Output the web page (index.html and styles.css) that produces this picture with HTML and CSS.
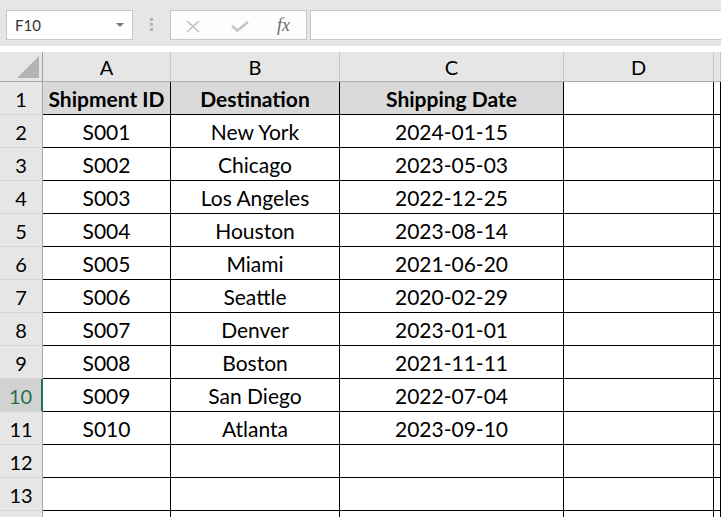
FILE: index.html
```html
<!DOCTYPE html>
<html lang="en">

<head>
    <meta charset="UTF-8">
    <meta name="viewport" content="width=device-width, initial-scale=1.0">
    <title>Shipments</title>
    <link rel="stylesheet" href="styles.css">
</head>

<body>
    <div class="formula-bar">
        <div class="name-box">
            <span>F10</span>
            <span class="caret"></span>
        </div>
        <div class="grip"><i></i><i></i><i></i></div>
        <div class="fx-buttons">
            <svg class="icon-x" width="14" height="13" viewBox="0 0 14 13">
                <path d="M1 1 L13 12 M13 1 L1 12" stroke="#bdbdbd" stroke-width="1.5" fill="none" />
            </svg>
            <svg class="icon-ok" width="18" height="11" viewBox="0 0 18 11">
                <path d="M1 5 L6.5 9.5 L17 1" stroke="#c4c4c4" stroke-width="2.6" fill="none" />
            </svg>
            <span class="fx">fx</span>
        </div>
        <div class="formula-input"></div>
    </div>

    <div class="sheet">
        <!-- column headers -->
        <div class="col-head corner"><span class="tri"></span></div>
        <div class="col-head">A</div>
        <div class="col-head">B</div>
        <div class="col-head">C</div>
        <div class="col-head">D</div>
        <div class="col-head"></div>

        <div class="row-head">1</div>
        <div class="cell th">Shipment ID</div>
        <div class="cell th">Destination</div>
        <div class="cell th">Shipping Date</div>
        <div class="cell"></div>
        <div class="cell"></div>

        <div class="row-head">2</div>
        <div class="cell">S001</div>
        <div class="cell">New York</div>
        <div class="cell">2024-01-15</div>
        <div class="cell"></div>
        <div class="cell"></div>

        <div class="row-head">3</div>
        <div class="cell">S002</div>
        <div class="cell">Chicago</div>
        <div class="cell">2023-05-03</div>
        <div class="cell"></div>
        <div class="cell"></div>

        <div class="row-head">4</div>
        <div class="cell">S003</div>
        <div class="cell">Los Angeles</div>
        <div class="cell">2022-12-25</div>
        <div class="cell"></div>
        <div class="cell"></div>

        <div class="row-head">5</div>
        <div class="cell">S004</div>
        <div class="cell">Houston</div>
        <div class="cell">2023-08-14</div>
        <div class="cell"></div>
        <div class="cell"></div>

        <div class="row-head">6</div>
        <div class="cell">S005</div>
        <div class="cell">Miami</div>
        <div class="cell">2021-06-20</div>
        <div class="cell"></div>
        <div class="cell"></div>

        <div class="row-head">7</div>
        <div class="cell">S006</div>
        <div class="cell">Seattle</div>
        <div class="cell">2020-02-29</div>
        <div class="cell"></div>
        <div class="cell"></div>

        <div class="row-head">8</div>
        <div class="cell">S007</div>
        <div class="cell">Denver</div>
        <div class="cell">2023-01-01</div>
        <div class="cell"></div>
        <div class="cell"></div>

        <div class="row-head">9</div>
        <div class="cell">S008</div>
        <div class="cell">Boston</div>
        <div class="cell">2021-11-11</div>
        <div class="cell"></div>
        <div class="cell"></div>

        <div class="row-head active">10</div>
        <div class="cell">S009</div>
        <div class="cell">San Diego</div>
        <div class="cell">2022-07-04</div>
        <div class="cell"></div>
        <div class="cell"></div>

        <div class="row-head">11</div>
        <div class="cell">S010</div>
        <div class="cell">Atlanta</div>
        <div class="cell">2023-09-10</div>
        <div class="cell"></div>
        <div class="cell"></div>

        <div class="row-head">12</div>
        <div class="cell"></div>
        <div class="cell"></div>
        <div class="cell"></div>
        <div class="cell"></div>
        <div class="cell"></div>

        <div class="row-head">13</div>
        <div class="cell"></div>
        <div class="cell"></div>
        <div class="cell"></div>
        <div class="cell"></div>
        <div class="cell"></div>

        <div class="row-head"></div>
        <div class="cell"></div>
        <div class="cell"></div>
        <div class="cell"></div>
        <div class="cell"></div>
        <div class="cell"></div>
    </div>
</body>

</html>
```

FILE: styles.css
```css
* {
    margin: 0;
    padding: 0;
    box-sizing: border-box;
}

html,
body {
    width: 721px;
    height: 517px;
    overflow: hidden;
    background: #e6e6e6;
    font-family: "Lato", "Liberation Sans", sans-serif;
    color: #000;
}

/* formula bar */
.formula-bar {
    display: flex;
    align-items: flex-start;
    height: 46px;
    padding: 10px 0 0 6px;
}

.name-box {
    display: flex;
    align-items: center;
    justify-content: space-between;
    width: 127px;
    height: 30px;
    padding: 0 8px 0 8px;
    background: #fff;
    border: 1px solid #c6c6c6;
    font-size: 15px;
    color: #333;
}

.caret {
    width: 0;
    height: 0;
    border-left: 4px solid transparent;
    border-right: 4px solid transparent;
    border-top: 4px solid #777;
}

.grip {
    display: flex;
    flex-direction: column;
    gap: 2px;
    width: 3px;
    margin: 8px 17px 0 17px;
}

.grip i {
    display: block;
    width: 3px;
    height: 3px;
    background: #b4b4b4;
}

.fx-buttons {
    display: flex;
    align-items: center;
    width: 137px;
    height: 30px;
    padding-left: 15px;
    background: #fdfdfd;
    border: 1px solid #c6c6c6;
}

.icon-x {
    margin-top: 2px;
}

.icon-ok {
    margin: 3px 0 0 31px;
}

.fx {
    margin-left: 28px;
    font-family: "Liberation Serif", serif;
    font-style: italic;
    font-size: 18px;
    color: #6a6a6a;
}

.formula-input {
    flex: 1;
    height: 30px;
    margin-left: 3px;
    margin-right: -4px;
    background: #fff;
    border: 1px solid #c6c6c6;
}

/* grid */
.sheet {
    display: grid;
    grid-template-columns: 43px 128px 169px 224px 150px 1fr;
    grid-auto-rows: 33px;
    grid-template-rows: 36px;
    background: #fff;
}

.col-head {
    margin-top: 6px;
    background: #e6e6e6;
    border-right: 1px solid #c6c6c6;
    border-bottom: 1px solid #ababab;
    text-align: center;
    font-size: 20px;
    line-height: 27px;
    padding-top: 2px;
}

.corner {
    display: flex;
    align-items: flex-end;
    justify-content: flex-end;
    padding: 0 3px 3px 0;
    border-right-color: #9e9e9e;
}

.tri {
    display: block;
    width: 22px;
    height: 22px;
    background: #b4b4b4;
    clip-path: polygon(100% 0, 100% 100%, 0 100%);
}

.row-head {
    background: #e6e6e6;
    border-right: 1px solid #a6a6a6;
    border-bottom: 1px solid #d4d4d4;
    text-align: center;
    font-size: 20px;
    line-height: 30px;
    padding-top: 2px;
}

.row-head.active {
    background: #d2d2d2;
    color: #217346;
    border-right: 2px solid #217346;
}

.cell {
    border-right: 1px solid #000;
    border-bottom: 1px solid #000;
    text-align: center;
    font-size: 21px;
    line-height: 30px;
    padding-top: 2px;
    white-space: nowrap;
}

.cell.th {
    background: #d9d9d9;
    font-weight: bold;
}
```
